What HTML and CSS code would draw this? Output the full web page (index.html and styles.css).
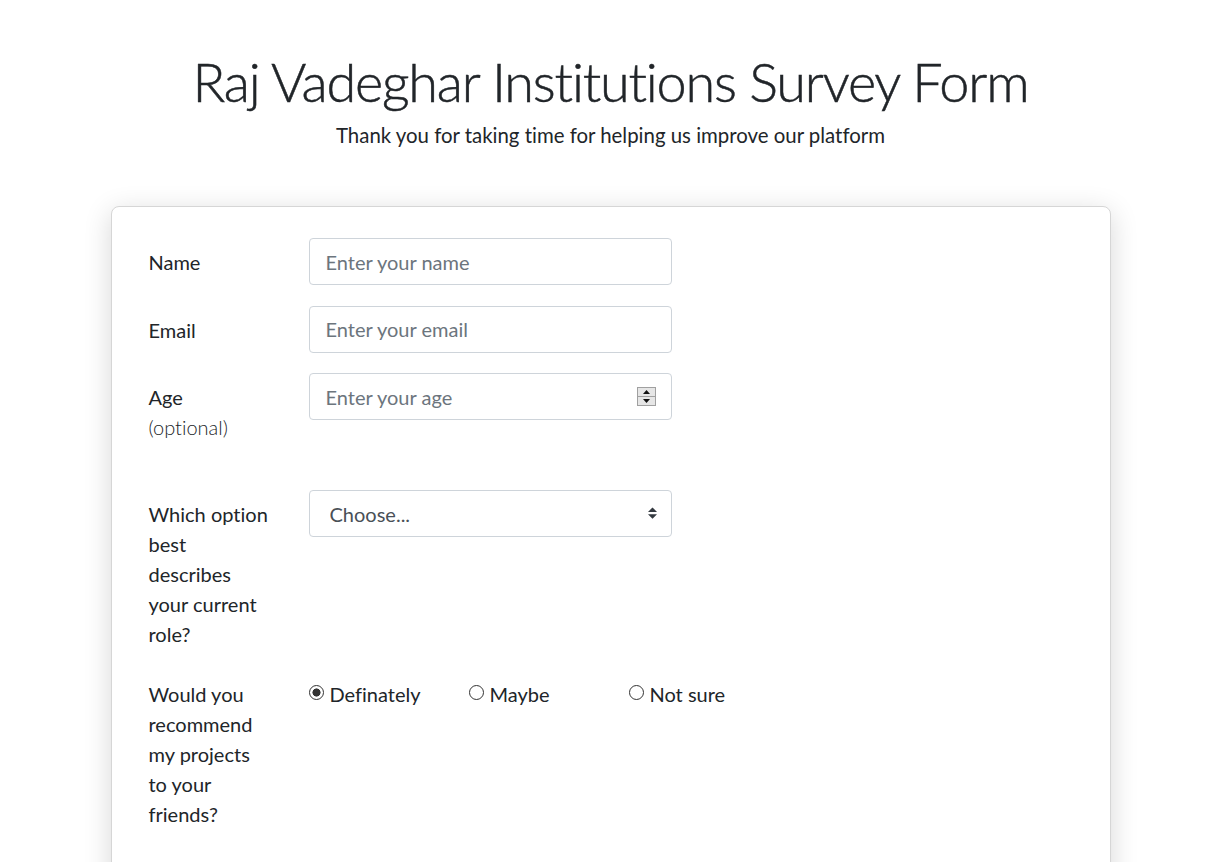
FILE: index.html
```html
<!DOCTYPE html>
<html lang="en">
<head>
<meta charset="utf-8">
<title>Survey Form</title>
<link rel="stylesheet" href="styles.css">
</head>
<body>
<div class="page">
  <header class="hero">
    <h1 class="title">Raj Vadeghar Institutions Survey Form</h1>
    <p class="subtitle">Thank you for taking time for helping us improve our platform</p>
  </header>
  <main class="card">
    <form class="form">
      <div class="row">
        <label class="lbl" for="name">Name</label>
        <div class="field"><input class="input" id="name" type="text" placeholder="Enter your name"></div>
      </div>
      <div class="row">
        <label class="lbl" for="email">Email</label>
        <div class="field"><input class="input" id="email" type="text" placeholder="Enter your email"></div>
      </div>
      <div class="row row-age">
        <label class="lbl" for="age">Age<span class="hint">(optional)</span></label>
        <div class="field number">
          <input class="input" id="age" type="text" placeholder="Enter your age">
          <svg class="spin" width="19" height="19" viewBox="0 0 19 19" aria-hidden="true">
            <rect x="0.5" y="0.5" width="18" height="18" fill="#efefef" stroke="#a0a0a0"/>
            <line x1="1" y1="9.5" x2="18" y2="9.5" stroke="#a0a0a0"/>
            <rect x="1" y="1" width="17" height="8" fill="#e6e6e6"/>
            <rect x="1" y="10" width="17" height="8" fill="#e6e6e6"/>
            <path d="M9.5 3 L13 7 L6 7 Z" fill="#111"/>
            <path d="M6 12 L13 12 L9.5 16 Z" fill="#111"/>
          </svg>
        </div>
      </div>
      <div class="row">
        <label class="lbl" for="role">Which option best describes your current role?</label>
        <div class="field select-wrap">
          <select class="select" id="role">
            <option>Choose...</option>
          </select>
          <svg class="caret" width="9" height="12" viewBox="0 0 4 5" aria-hidden="true"><path d="M2 0L0 2h4zm0 5L0 3h4z" fill="#343a40"/></svg>
        </div>
      </div>
      <div class="row">
        <span class="lbl">Would you recommend my projects to your friends?</span>
        <div class="radios">
          <label class="radio"><input type="radio" name="rec" checked><span>Definately</span></label>
          <label class="radio"><input type="radio" name="rec"><span>Maybe</span></label>
          <label class="radio"><input type="radio" name="rec"><span>Not sure</span></label>
        </div>
      </div>
    </form>
  </main>
</div>
</body>
</html>
```

FILE: styles.css
```css
* { box-sizing: border-box; }
html, body { margin: 0; padding: 0; background: #fff; }
body {
  font-family: "Lato", "Open Sans", sans-serif;
  font-variant-ligatures: none;
  color: #212529;
  font-size: 20px;
  line-height: 30px;
}
.page { padding: 48px 0 0 8px; }
.hero { text-align: center; }
.title {
  margin: 0;
  font-size: 54px;
  font-weight: 300;
  letter-spacing: -1.2px;
  line-height: 67px;
  -webkit-text-stroke: 0.5px #212529;
}
.subtitle {
  margin: 5px 0 0;
  font-size: 20.4px;
  line-height: 30px;
}
.card {
  width: 1000px;
  margin: 56px auto 0;
  background: #fff;
  border: 1px solid #d6d6d6;
  border-radius: 8px;
  box-shadow: 0 6px 28px rgba(0,0,0,0.16);
  padding: 31px 37px 200px;
}
.form { display: flex; flex-direction: column; }
.row { display: flex; align-items: flex-start; margin-bottom: 20.6px; }
.row-age { margin-bottom: 48px; }
.lbl {
  flex: 0 0 160px;
  width: 160px;
  padding: 9px 39px 0 0;
  line-height: 30px;
}
.hint { display: block; font-size: 20px; font-weight: 300; }
.field { position: relative; width: 363px; }
.input, .select {
  display: block;
  width: 363px;
  height: 47px;
  border: 1px solid #ced4da;
  border-radius: 4px;
  background: #fff;
  font-family: inherit;
  font-size: 20px;
  color: #495057;
  padding: 0 16px;
  outline: none;
}
.input::placeholder { color: #6c757d; opacity: 1; }
.select {
  -webkit-appearance: none;
  appearance: none;
  padding-left: 20px;
}
.spin { position: absolute; right: 16px; top: 14px; }
.caret { position: absolute; right: 15px; top: 17px; pointer-events: none; }
.radios { display: flex; padding-top: 9px; }
.radio {
  flex: 0 0 160px;
  display: flex;
  align-items: center;
  gap: 6px;
  line-height: 30px;
}
.radio input {
  -webkit-appearance: none;
  appearance: none;
  margin: 0;
  width: 15px;
  height: 15px;
  border: 1px solid #333;
  border-radius: 50%;
  background: #fff;
  position: relative;
  top: -1px;
}
.radio input:checked {
  background: radial-gradient(circle, #333 0 3.8px, #fff 4.3px);
}
```
